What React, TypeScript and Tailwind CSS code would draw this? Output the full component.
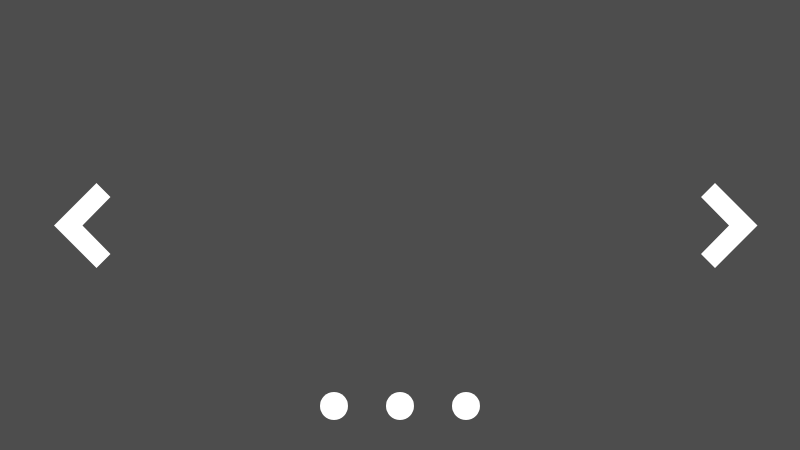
import React from "react";

function Chevron({ dir }: { dir: "left" | "right" }) {
  const points =
    dir === "left"
      ? "0,42.5 42.5,0 56.5,14 28.5,42.5 56.5,71 42.5,85"
      : "14,0 56.5,42.5 14,85 0,71 28,42.5 0,14";
  return (
    <svg viewBox="0 0 57 85" className="h-[85px] w-[57px]" aria-hidden="true">
      <polygon points={points} fill="#ffffff" />
    </svg>
  );
}

export default function App() {
  const slides = [0, 1, 2];
  return (
    <div className="relative h-[450px] w-[800px] overflow-hidden bg-[#4d4d4d]">
      <button className="absolute left-[54px] top-[183px] block" aria-label="Previous">
        <Chevron dir="left" />
      </button>
      <button className="absolute left-[701px] top-[183px] block" aria-label="Next">
        <Chevron dir="right" />
      </button>
      <div className="absolute inset-x-0 top-[392px] flex justify-center gap-[38px]">
        {slides.map((s) => (
          <button key={s} className="h-[28px] w-[28px] rounded-full bg-white" aria-label={`Slide ${s + 1}`} />
        ))}
      </div>
    </div>
  );
}
